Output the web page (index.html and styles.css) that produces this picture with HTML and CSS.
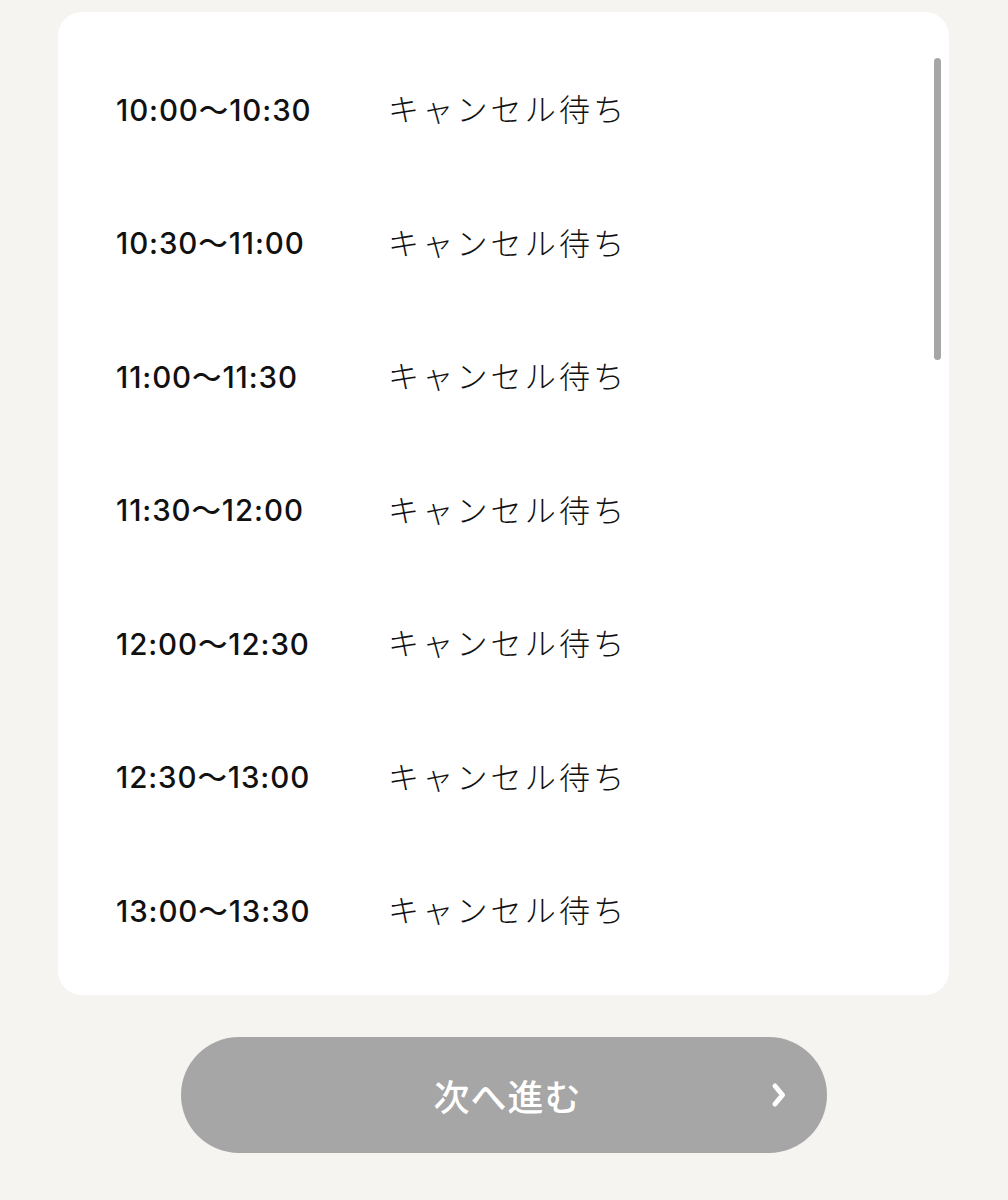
FILE: index.html
```html
<!DOCTYPE html>
<html lang="ja">
<head>
  <meta charset="UTF-8">
  <meta name="viewport" content="width=device-width, initial-scale=1.0">
  <title>予約時間</title>
  <link rel="stylesheet" href="styles.css">
</head>
<body>
  <div class="page">
    <div class="card">
      <ul class="slots">
        <li class="slot"><span class="time">10:00〜10:30</span><span class="status">キャンセル待ち</span></li>
        <li class="slot"><span class="time">10:30〜11:00</span><span class="status">キャンセル待ち</span></li>
        <li class="slot"><span class="time">11:00〜11:30</span><span class="status">キャンセル待ち</span></li>
        <li class="slot"><span class="time">11:30〜12:00</span><span class="status">キャンセル待ち</span></li>
        <li class="slot"><span class="time">12:00〜12:30</span><span class="status">キャンセル待ち</span></li>
        <li class="slot"><span class="time">12:30〜13:00</span><span class="status">キャンセル待ち</span></li>
        <li class="slot"><span class="time">13:00〜13:30</span><span class="status">キャンセル待ち</span></li>
      </ul>
      <div class="scroll-thumb"></div>
    </div>

    <button type="button" class="btn-next" disabled>
      <span class="btn-label">次へ進む</span>
      <svg class="btn-arrow" viewBox="0 0 16 28" width="16" height="28">
        <path d="M4 5 L11.5 14 L4 23" fill="none" stroke="#fff" stroke-width="5" stroke-linecap="round" stroke-linejoin="round"/>
      </svg>
    </button>
  </div>
</body>
</html>
```

FILE: styles.css
```css
:root {
  --page-bg: #f5f4f0;
  --card-bg: #ffffff;
  --text: #111111;
  --muted: #a6a6a6;
  --radius: 24px;
}
* {
  box-sizing: border-box;
  margin: 0;
  padding: 0;
}
body {
  background: var(--page-bg);
  font-family: "Noto Sans CJK JP", "Noto Sans", sans-serif;
  color: var(--text);
  height: 1200px;
  overflow: hidden;
}
.page {
  padding: 12px 59px 0 58px;
  display: flex;
  flex-direction: column;
  align-items: center;
}
.card {
  position: relative;
  width: 100%;
  height: 983px;
  background: var(--card-bg);
  border-radius: var(--radius);
  overflow: hidden;
}
.slots {
  list-style: none;
  padding: 29px 0 0 58px;
}
.slot {
  height: 133.5px;
  display: flex;
  align-items: center;
}
.time {
  width: 272px;
  font-family: "Inter", "Noto Sans CJK JP", sans-serif;
  font-weight: 500;
  font-size: 29.5px;
  letter-spacing: 0.9px;
}
.status {
  font-size: 31px;
  font-weight: 300;
  letter-spacing: 3.2px;
}
.scroll-thumb {
  position: absolute;
  top: 46px;
  right: 8px;
  width: 7px;
  height: 302px;
  border-radius: 4px;
  background: var(--muted);
}
.btn-next {
  position: relative;
  margin-top: 42px;
  width: 646px;
  height: 116px;
  border: none;
  border-radius: 58px;
  background: var(--muted);
  color: #fff;
  font-family: "Noto Sans CJK JP", sans-serif;
  font-size: 36px;
  font-weight: 500;
  display: flex;
  align-items: center;
  justify-content: center;
}
.btn-label {
  margin-left: 8px;
  letter-spacing: 1px;
}
.btn-arrow {
  position: absolute;
  right: 40px;
  top: 44px;
}
```
